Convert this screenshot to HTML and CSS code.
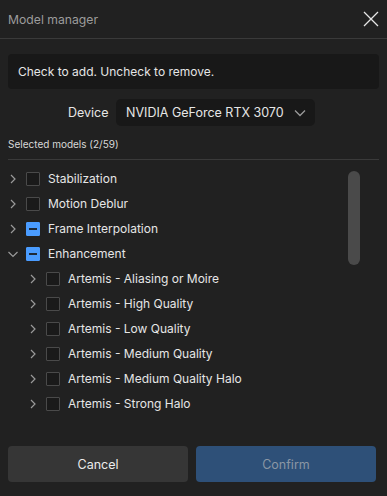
FILE: index.html
```html
<!DOCTYPE html>
<html lang="en">
<head>
    <meta charset="UTF-8">
    <title>Model manager</title>
    <link rel="stylesheet" href="styles.css">
</head>
<body>
    <div class="dialog">
        <div class="header">
            <span class="title">Model manager</span>
            <svg class="close" width="16" height="16" viewBox="0 0 16 16">
                <path d="M1 1L15 15M15 1L1 15" stroke="#e6e6e6" stroke-width="1.3" fill="none"/>
            </svg>
        </div>

        <div class="body">
            <div class="info">Check to add. Uncheck to remove.</div>

            <div class="device-row">
                <span class="device-label">Device</span>
                <div class="select">
                    <span>NVIDIA GeForce RTX 3070</span>
                    <svg width="12" height="8" viewBox="0 0 12 8">
                        <path d="M1 1.5L6 6.5L11 1.5" stroke="#9a9a9a" stroke-width="1.3" fill="none"/>
                    </svg>
                </div>
            </div>

            <div class="count">Selected models (2/59)</div>

            <div class="tree-wrap">
                <div class="tree">
                    <div class="row">
                        <svg class="chev" viewBox="0 0 10 10"><path d="M3 1L7 5L3 9"/></svg>
                        <span class="box"></span>
                        <span class="label">Stabilization</span>
                    </div>
                    <div class="row">
                        <svg class="chev" viewBox="0 0 10 10"><path d="M3 1L7 5L3 9"/></svg>
                        <span class="box"></span>
                        <span class="label">Motion Deblur</span>
                    </div>
                    <div class="row">
                        <svg class="chev" viewBox="0 0 10 10"><path d="M3 1L7 5L3 9"/></svg>
                        <span class="box partial"></span>
                        <span class="label">Frame Interpolation</span>
                    </div>
                    <div class="row">
                        <svg class="chev" viewBox="0 0 10 10"><path d="M0.5 3L5 7.5L9.5 3"/></svg>
                        <span class="box partial"></span>
                        <span class="label">Enhancement</span>
                    </div>
                    <div class="row child">
                        <svg class="chev" viewBox="0 0 10 10"><path d="M3 1L7 5L3 9"/></svg>
                        <span class="box"></span>
                        <span class="label">Artemis - Aliasing or Moire</span>
                    </div>
                    <div class="row child">
                        <svg class="chev" viewBox="0 0 10 10"><path d="M3 1L7 5L3 9"/></svg>
                        <span class="box"></span>
                        <span class="label">Artemis - High Quality</span>
                    </div>
                    <div class="row child">
                        <svg class="chev" viewBox="0 0 10 10"><path d="M3 1L7 5L3 9"/></svg>
                        <span class="box"></span>
                        <span class="label">Artemis - Low Quality</span>
                    </div>
                    <div class="row child">
                        <svg class="chev" viewBox="0 0 10 10"><path d="M3 1L7 5L3 9"/></svg>
                        <span class="box"></span>
                        <span class="label">Artemis - Medium Quality</span>
                    </div>
                    <div class="row child">
                        <svg class="chev" viewBox="0 0 10 10"><path d="M3 1L7 5L3 9"/></svg>
                        <span class="box"></span>
                        <span class="label">Artemis - Medium Quality Halo</span>
                    </div>
                    <div class="row child">
                        <svg class="chev" viewBox="0 0 10 10"><path d="M3 1L7 5L3 9"/></svg>
                        <span class="box"></span>
                        <span class="label">Artemis - Strong Halo</span>
                    </div>
                </div>
                <div class="scrollbar"></div>
            </div>
        </div>

        <div class="footer">
            <button class="btn cancel">Cancel</button>
            <button class="btn confirm">Confirm</button>
        </div>
    </div>
</body>
</html>
```

FILE: styles.css
```css
html, body {
    margin: 0;
    padding: 0;
    background: #212121;
}
body {
    font-family: Inter, 'Noto Sans', sans-serif;
    color: #e6e6e6;
    font-size: 12px;
    width: 387px;
    height: 496px;
    overflow: hidden;
}
.dialog {
    display: flex;
    flex-direction: column;
    height: 496px;
}
.header {
    height: 38px;
    display: flex;
    align-items: center;
    justify-content: space-between;
    padding: 0 8px;
    border-bottom: 1px solid #3a3a3a;
}
.title {
    font-size: 12.2px;
    color: #9c9c9c;
}
.body {
    padding: 15px 8px 0 8px;
    flex: 1;
}
.info {
    background: #181818;
    border-radius: 4px;
    height: 35px;
    display: flex;
    align-items: center;
    padding-left: 10px;
    font-size: 12px;
}
.device-row {
    display: flex;
    align-items: center;
    margin-top: 10px;
    padding-left: 60px;
}
.device-label {
    font-size: 12.5px;
    width: 48px;
}
.select {
    width: 180px;
    height: 27px;
    background: #181818;
    border-radius: 5px;
    display: flex;
    align-items: center;
    justify-content: space-between;
    padding: 0 9px 0 10px;
    font-size: 12.5px;
}
.count {
    font-size: 10px;
    color: #d8d8d8;
    margin-top: 12px;
    padding-bottom: 9px;
    border-bottom: 1px solid #3a3a3a;
}
.tree-wrap {
    display: flex;
    justify-content: space-between;
    padding-top: 6px;
}
.tree {
    display: flex;
    flex-direction: column;
}
.row {
    height: 25px;
    display: flex;
    align-items: center;
}
.row.child {
    padding-left: 20px;
}
.chev {
    width: 10px;
    height: 10px;
    margin-right: 8px;
    fill: none;
    stroke: #9a9a9a;
    stroke-width: 1.2;
}
.box {
    width: 12px;
    height: 12px;
    border: 1px solid #4a4a4a;
    background: #1a1a1a;
    border-radius: 1px;
    margin-right: 8px;
    position: relative;
}
.box.partial {
    background: #4a9cff;
    border-color: #4a9cff;
}
.box.partial::after {
    content: "";
    position: absolute;
    left: 2px;
    top: 5px;
    width: 8px;
    height: 2px;
    background: #1e2a38;
}
.label {
    font-size: 12px;
}
.scrollbar {
    width: 12px;
    height: 94px;
    background: #4a4a4a;
    border-radius: 6px;
    margin-top: 5px;
    margin-right: 19px;
}
.footer {
    display: flex;
    gap: 8px;
    padding: 0 11px 14px 8px;
}
.btn {
    flex: 1;
    height: 36px;
    border: none;
    border-radius: 4px;
    font-family: Inter, 'Noto Sans', sans-serif;
    font-size: 12.5px;
}
.cancel {
    background: #363636;
    color: #ececec;
}
.confirm {
    background: #2e5078;
    color: #8a96a4;
}
```
